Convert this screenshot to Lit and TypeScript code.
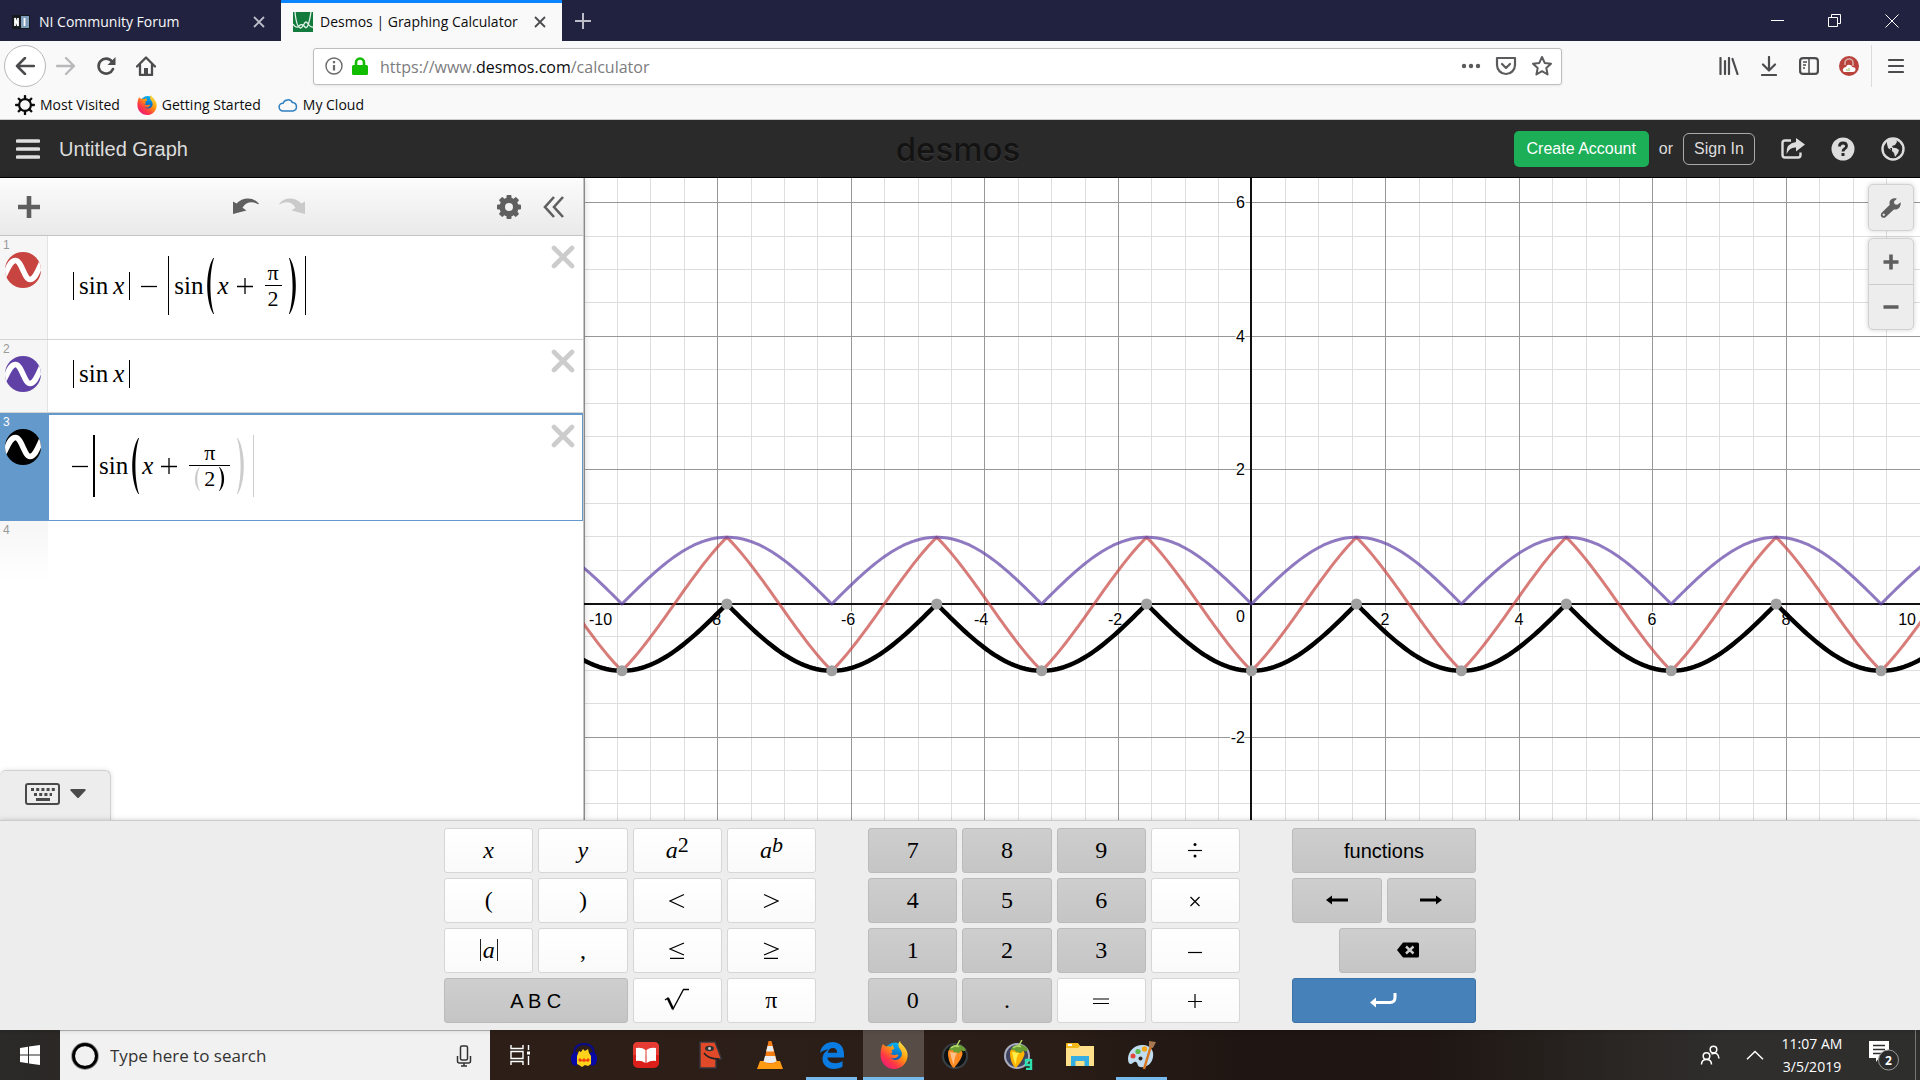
import { LitElement, html, svg, css, nothing } from "lit";
import { customElement, property } from "lit/decorators.js";

const UNIT = 66.8;
const ORIGIN_X = 667.5;
const ORIGIN_Y = 426;
const PLOT_W = 1336;
const PLOT_H = 642;

const px = (x: number) => ORIGIN_X + x * UNIT;
const py = (y: number) => ORIGIN_Y - y * UNIT;

const curve = (fn: (x: number) => number) => {
  const points: string[] = [];
  const step = Math.PI / 80;
  for (let i = -260; i <= 260; i++) {
    const x = i * step;
    points.push(`${px(x).toFixed(2)} ${py(fn(x)).toFixed(2)}`);
  }
  return "M" + points.join("L");
};

@customElement("graph-plot")
export class GraphPlot extends LitElement {
  static styles = css`
    :host { display: block; position: relative; overflow: hidden; background: #fff; }
    .plot { position: absolute; inset: 0; width: 100%; height: 100%; display: block; }
    .minor { stroke: #dedede; }
    .major { stroke: #979797; }
    .axis { stroke: #111; stroke-width: 2; }
    .label {
      font: 16px "Liberation Sans", Arial, sans-serif;
      fill: #000; stroke: #fff; stroke-width: 3; paint-order: stroke; stroke-linejoin: round;
    }
    .mid { text-anchor: middle; }
    .end { text-anchor: end; }
    .red, .purple, .black { fill: none; stroke-linejoin: round; }
    .red { stroke: #c74440; stroke-width: 3; opacity: .7; }
    .purple { stroke: #6042a6; stroke-width: 3; opacity: .7; }
    .black { stroke: #000; stroke-width: 4.5; }
    .poi { fill: #a0a0a0; }
    .controls {
      position: absolute; top: 6px; right: 6px; width: 46px;
      display: flex; flex-direction: column; gap: 7px;
    }
    .group {
      display: flex; flex-direction: column; border: 1px solid #d2d2d2; border-radius: 5px;
      background: #ededed; box-shadow: 0 0 5px rgba(0, 0, 0, .18); overflow: hidden;
    }
    .ctl {
      height: 45px; padding: 0; border: 0; background: none; color: #5f5f5f;
      display: grid; place-items: center;
    }
    .ctl + .ctl { border-top: 1px solid #ccc; }
  `;

  render() {
    const lines = [];
    for (const major of [false, true]) {
      for (let i = -20; i <= 20; i++) {
        if (i === 0 || (i % 4 === 0) !== major) continue;
        const cls = major ? "major" : "minor";
        const x = Math.round(px(i / 2)) + 0.5;
        const y = Math.round(py(i / 2)) - 0.5;
        lines.push(svg`<line class=${cls} x1=${x} x2=${x} y1="0" y2=${PLOT_H}></line>`);
        if (y > 0 && y < PLOT_H)
          lines.push(svg`<line class=${cls} x1="0" x2=${PLOT_W} y1=${y} y2=${y}></line>`);
      }
    }
    const pois = [];
    for (let k = -3; k <= 3; k++) pois.push([k * Math.PI, -1]);
    for (let k = -3; k <= 2; k++) pois.push([(k + 0.5) * Math.PI, 0]);
    return html`
      <svg class="plot" viewBox="0 0 ${PLOT_W} ${PLOT_H}" preserveAspectRatio="xMidYMid slice" role="img" aria-label="Graph">
        ${lines}
        <line class="axis" x1="0" x2=${PLOT_W} y1="426" y2="426"></line>
        <line class="axis" x1="667" x2="667" y1="0" y2=${PLOT_H}></line>
        ${[-8, -6, -4, -2, 2, 4, 6, 8].map(
          (n) => svg`<text class="label mid" x=${Math.round(px(n)) - (n < 0 ? 3 : 0)} y="447">${n}</text>`
        )}
        <text class="label" x="5" y="447">-10</text>
        <text class="label end" x="1332" y="447">10</text>
        <text class="label end" x="661" y="444">0</text>
        ${[6, 4, 2, -2].map(
          (n) => svg`<text class="label end" x="661" y=${Math.round(py(n)) + 5}>${n}</text>`
        )}
        <path class="red" d=${curve((x) => Math.abs(Math.sin(x)) - Math.abs(Math.cos(x)))}></path>
        <path class="purple" d=${curve((x) => Math.abs(Math.sin(x)))}></path>
        <path class="black" d=${curve((x) => -Math.abs(Math.cos(x)))}></path>
        ${pois.map(([x, y]) => svg`<circle class="poi" cx=${px(x)} cy=${py(y)} r="5.5"></circle>`)}
      </svg>
      <div class="controls">
        <div class="group">
          <button class="ctl" aria-label="Graph Settings">
            <svg width="22" height="22" viewBox="0 0 22 22"><path fill="currentColor" fill-rule="evenodd" d="M20.6 5.2l-3.2 2.6-2.8-.6-.7-2.7 3-2.8C14 .4 10.400 1.700 9.600 4.700c-.3 1.200-.1 2.200.2 3L1.700 15.800c-1.200 1.300-1.200 3.100-.1 4.200 1.100 1.100 3 1.200 4.200 0l8.100-7.600c3.400 1 7.500-2 6.700-7.200zM4.600 18.600a1.200 1.200 0 1 1-1.700-1.700 1.200 1.200 0 0 1 1.700 1.700z"/></svg>
          </button>
        </div>
        <div class="group">
          <button class="ctl" aria-label="Zoom In">
            <svg width="16" height="16" viewBox="0 0 16 16"><path stroke="currentColor" stroke-width="3.600" d="M8 .5v15M.5 8h15"/></svg>
          </button>
          <button class="ctl" aria-label="Zoom Out">
            <svg width="16" height="16" viewBox="0 0 16 16"><path stroke="currentColor" stroke-width="3.600" d="M.5 8h15"/></svg>
          </button>
        </div>
      </div>
    `;
  }
}

const openParen = (cls: string) => html`<svg class="paren ${cls}" viewBox="0 0 10 60" preserveAspectRatio="none" aria-label="("><path fill="currentColor" d="M9 0C-1 14-1 46 9 60h1C4 44 4 16 10 0z"/></svg>`;
const closeParen = (cls: string) => html`<svg class="paren ${cls}" viewBox="0 0 10 60" preserveAspectRatio="none" aria-label=")"><path fill="currentColor" d="M1 0C11 14 11 46 1 60H0C6 44 6 16 0 0z"/></svg>`;

@customElement("expression-row")
export class ExpressionRow extends LitElement {
  @property() number = "";
  @property() color = "";
  @property({ type: Boolean, reflect: true }) selected = false;
  @property({ type: Boolean, reflect: true }) blank = false;

  static styles = css`
    :host { display: flex; border-bottom: 1px solid #d4d4d4; background: #fff; }
    .gutter {
      flex: none; width: 48px; background: #f6f6f6; border-right: 1px solid #e3e3e3;
      font: 12px/14px "Liberation Sans", Arial, sans-serif; color: #999; padding-top: 2px; box-sizing: border-box;
      display: flex; flex-direction: column;
    }
    .num { padding-left: 3px; }
    .toggle { width: 36px; height: 36px; padding: 0; border: 0; background: none; margin: 0 auto 0 5px; border-radius: 50%; }
    .toggle svg { display: block; }
    .body { flex: 1; display: flex; justify-content: space-between; align-items: flex-start; padding-right: 8px; }
    .formula {
      display: flex; align-items: center; padding: 20px 0 24px 25px; min-height: 28px;
      font: 25px/28px "Liberation Serif", "Times New Roman", serif; color: #000;
    }
    .remove { margin-top: 9px; padding: 0; width: 24px; height: 24px; border: 0; background: none; color: #ccc; }
    .remove svg { display: block; }
    :host([selected]) { border: 0; }
    :host([selected]) .gutter { background: #6399cb; border-color: #6399cb; color: #fff; }
    :host([selected]) .body { border: 1px solid #6399cb; border-top-width: 2px; padding-right: 7px; }
    :host([selected]) .formula { padding-left: 23px; padding-bottom: 23px; }
    :host([blank]) { border: 0; height: 60px; }
    :host([blank]) .gutter { background: linear-gradient(#f6f6f6, #fff); border-color: transparent; }
    .abs { display: flex; align-items: center; border: solid #000; border-width: 0 1px; padding: 0 5px; }
    .big { height: 59px; }
    .open-abs { border-left-width: 2px; border-right-color: #ccc; height: 62px; padding-left: 4px; }
    .paren { width: 8px; height: 56px; display: block; margin: 0 3px; }
    .small { height: 24px; width: 6px; margin: 0; }
    .ghost { color: #ccc; }
    .op { width: 16px; height: 16px; margin: 0 11px; display: block; }
    .tight { margin: 0 5px 0 0; }
    .left { margin: 0 12px 0 8px; }
    .x { margin-left: 5px; }
    .frac { display: flex; flex-direction: column; text-align: center; font-size: 22px; line-height: 24px; margin-right: 4px; }
    .bottom { border-top: 1px solid #000; padding: 1px 3px 0; display: flex; justify-content: center; align-items: center; gap: 4px; }
    .wide { padding: 1px 5px 0; }
  `;

  private plus(cls = "") {
    return html`<svg class="op ${cls}" viewBox="0 0 16 16" aria-label="+"><path stroke="#000" stroke-width="1.300" d="M8 0v16M0 8.500h16"/></svg>`;
  }
  private minus(cls = "") {
    return html`<svg class="op ${cls}" viewBox="0 0 16 16" aria-label="−"><path stroke="#000" stroke-width="1.300" d="M0 8.500h16"/></svg>`;
  }
  private sinX() {
    return html`<span class="abs">sin<i class="x">x</i></span>`;
  }
  private formula() {
    if (this.number === "1")
      return html`${this.sinX()}${this.minus()}
        <span class="abs big">sin${openParen("")}<i>x</i>${this.plus("left")}<span class="frac"><span>π</span><span class="bottom">2</span></span>${closeParen("")}</span>`;
    if (this.number === "2") return this.sinX();
    return html`${this.minus("tight")}
      <span class="abs open-abs">sin${openParen("")}<i>x</i>${this.plus("left")}<span class="frac"><span>π</span><span class="bottom wide">${openParen("small ghost")}2${closeParen("small")}</span></span>${closeParen("ghost")}</span>`;
  }

  render() {
    return html`
      <div class="gutter">
        <span class="num">${this.number}</span>
        ${this.blank
          ? nothing
          : html`<button class="toggle" aria-label="Hide expression ${this.number}">
              <svg width="36" height="36" viewBox="0 0 36 36">
                <defs><clipPath id="disc"><circle cx="18" cy="18" r="18"/></clipPath></defs>
                <circle cx="18" cy="18" r="18" fill=${this.color}/>
                <path clip-path="url(#disc)" d="M-1 24C4 14 6 8.500 10.500 8.500C16.500 8.500 19.500 27.500 25 27.500C29.500 27.500 32 21 36.500 11" fill="none" stroke="#fff" stroke-width="5.600"/>
              </svg></button>`}
      </div>
      <div class="body">
        ${this.blank
          ? nothing
          : html`<div class="formula">${this.formula()}</div>
              <button class="remove" aria-label="Delete expression ${this.number}">
                <svg width="24" height="24" viewBox="0 0 24 24"><path stroke="currentColor" stroke-width="4.600" stroke-linecap="round" d="M3 3l18 18M21 3L3 21"/></svg>
              </button>`}
      </div>
    `;
  }
}

@customElement("math-keypad")
export class MathKeypad extends LitElement {
  static styles = css`
    :host {
      display: flex; justify-content: center; gap: 52px; background: #ededed; border-top: 1px solid #ccc;
      padding: 7px 0; box-shadow: 0 0 5px rgba(0, 0, 0, .2); z-index: 1;
    }
    .pad { display: grid; grid-template-columns: repeat(4, 1fr); grid-auto-rows: 45px; gap: 5px; width: 372px; }
    .side { width: 184px; }
    .key {
      padding: 0 0 2px; border: 1px solid #d6d6d6; border-radius: 3px; background: linear-gradient(#fff, #fafafa);
      font: 24px/28px "Liberation Serif", "Times New Roman", serif; color: #000;
      display: flex; align-items: center; justify-content: center;
    }
    .dark { background: linear-gradient(#cecece, #c5c5c5); border-color: #bbb; }
    .sans { font: 20px/24px "Liberation Sans", Arial, sans-serif; padding: 0; }
    .w2 { grid-column: span 2; }
    .w3 { grid-column: 2 / span 3; }
    .w4 { grid-column: span 4; }
    .blue { background: #4781b9; border-color: #3b73a9; color: #fff; }
    .sup { font-size: 22px; line-height: 12px; align-self: flex-start; margin-top: 10px; }
    .bars { border: solid #222; border-width: 0 1px; line-height: 22px; padding: 0 2px; }
  `;

  private key(content: unknown, cls = "", label?: string) {
    return html`<button class="key ${cls}" aria-label=${label ?? nothing}>${content}</button>`;
  }
  private sign(d: string) {
    return html`<svg width="16" height="18" viewBox="0 0 16 18"><path d=${d} fill="none" stroke="#000" stroke-width="1.200"/></svg>`;
  }

  render() {
    const k = this.key.bind(this);
    const s = this.sign.bind(this);
    return html`
      <div class="pad">
        ${k(html`<i>x</i>`)}${k(html`<i>y</i>`)}
        ${k(html`<i>a</i><span class="sup">2</span>`)}${k(html`<i>a</i><i class="sup">b</i>`)}
        ${k("(")}${k(")")}
        ${k(s("M15 3.500L1 10l14 6.500"), "", "less than")}${k(s("M1 3.500L15 10L1 16.500"), "", "greater than")}
        ${k(html`<span class="bars"><i>a</i></span>`)}${k(",")}
        ${k(s("M15 2L1 8l14 6M1 17.400h14"), "", "less than or equal")}${k(s("M1 2L15 8L1 14M1 17.400h14"), "", "greater than or equal")}
        ${k("A B C", "dark sans w2")}
        ${k(html`<svg width="26" height="24" viewBox="0 0 26 24"><path d="M1 12l3-2 5 11L19.500 1.500H25" fill="none" stroke="#000" stroke-width="1.300"/><path d="M4 10.500l5 10.500" stroke="#000" stroke-width="2.500"/></svg>`, "", "square root")}
        ${k("π")}
      </div>
      <div class="pad">
        ${["7", "8", "9"].map((n) => k(n, "dark"))}
        ${k(html`<svg width="16" height="16" viewBox="0 0 16 16"><path d="M1 8.500h14" stroke="#000" stroke-width="1.200"/><circle cx="8" cy="2.500" r="1.500"/><circle cx="8" cy="14" r="1.500"/></svg>`, "", "divide")}
        ${["4", "5", "6"].map((n) => k(n, "dark"))}${k(s("M3.500 6l9 9M12.500 6l-9 9"), "", "multiply")}
        ${["1", "2", "3"].map((n) => k(n, "dark"))}${k(s("M1 11.500h14"), "", "minus")}
        ${k("0", "dark")}${k(".", "dark")}${k(s("M0 8h16M0 12.500h16"), "", "equals")}${k(s("M8 3v14M1 10.500h14"), "", "plus")}
      </div>
      <div class="pad side">
        ${k("functions", "dark sans w4")}
        ${k(html`<svg width="22" height="10" viewBox="0 0 22 10"><path d="M0 5l6-4.500v3h16v3H6v3z"/></svg>`, "dark w2", "left")}
        ${k(html`<svg width="22" height="10" viewBox="0 0 22 10"><path d="M22 5l-6-4.500v3H0v3h16v3z"/></svg>`, "dark w2", "right")}
        ${k(html`<svg width="22" height="16" viewBox="0 0 22 16"><path d="M0 8l6-7.500h14.500q1.500 0 1.500 1.500v12q0 1.500-1.500 1.500H6z"/><path d="M9 4.500l7.500 7M16.500 4.500L9 11.500" stroke="#ccc" stroke-width="2.400"/></svg>`, "dark w3", "backspace")}
        ${k(html`<svg width="28" height="16" viewBox="0 0 28 16"><path d="M5 10.500h15q5 0 5-5V1" fill="none" stroke="#fff" stroke-width="3"/><path d="M0 10.500l6-5v10z" fill="#fff"/></svg>`, "blue w4", "enter")}
      </div>
    `;
  }
}

const gear = (size: number, teeth: number, thick: number, outer: number, inner: number) => {
  const items = [];
  for (let i = 0; i < teeth; i++)
    items.push(svg`<rect x=${12 - thick / 2} y="0" width=${thick} height="6" rx="1" fill="currentColor" transform="rotate(${(i * 360) / teeth} 12 12)"></rect>`);
  return html`<svg width=${size} height=${size} viewBox="0 0 24 24">${items}<circle cx="12" cy="12" r=${(outer + inner) / 2} fill="none" stroke="currentColor" stroke-width=${outer - inner}></circle></svg>`;
};

const firefox = (size: number, id: string) => html`<svg width=${size} height=${size} viewBox="0 0 28 28">
  <defs>
    <linearGradient id="${id}a" x1=".9" y1="0" x2=".1" y2="1"><stop offset="0" stop-color="#fff44f"/><stop offset=".4" stop-color="#ff980e"/><stop offset=".7" stop-color="#ff3647"/><stop offset="1" stop-color="#e31587"/></linearGradient>
    <linearGradient id="${id}b" x1=".5" y1="0" x2=".3" y2="1"><stop offset="0" stop-color="#00b3f4"/><stop offset="1" stop-color="#0a3fa8"/></linearGradient>
  </defs>
  <circle cx="15" cy="12" r="10.500" fill="url(#${id}b)"/>
  <path fill="url(#${id}a)" d="M3 3c1 1 2 2 3 2.500 2-.6 3.500-.4 5 .300L13 3.500c0 2 .500 3 1.500 4.200-1 .8-1.800 1-3 1.400l1 2.200-2.300 2c2 0 3 1 4.800.700 2-.3 3-.8 3.500.200-2 3.300-5 3.800-7.800 2.500 4 4.500 11 1.800 11.200-3.700.1-3.500-2.400-5-3.200-7C18 3.500 18.500 1.500 20 0c.300 2.500 2.500 3.500 4.700 6.500C27 9.500 28 12.500 27.500 16 26.500 23 21 28 14 28 6.500 28 .600 22 .600 14.500.600 10 1 6 3 3z"/>
</svg>`;

const fruit = (badge: boolean) => html`<svg width="30" height="30" viewBox="0 0 30 30">
  <circle cx="14" cy="16" r="13" fill=${badge ? "#a9adc0" : "#3a4044"}/><circle cx="14" cy="16" r="11" fill=${badge ? "#3f4360" : "#0e1112"}/>
  <path d="M7 13c0-4 4-6 8-5s8 3 6 8-5 8-8 12c-4-2-6-10-6-15z" fill=${badge ? "#ffb400" : "#ff8a1f"}/>
  <path d="M9 12c1 5 2 9 4 13 0-5 1-9 3-12z" fill=${badge ? "#fff04a" : "#ffc08a"}/>
  <path d="M8 9c2-3 4-4 7-4 4-1 8 1 10 5-2 2-4 1-5 0 0 3-3 4-5 2-1 1-3 0-3-2-2 1-3 0-4-1z" fill="#6a9e35"/>
  <path d="M10 8c2-2 6-3 8-1M15 7l4-7" stroke="#b4d86a" stroke-width="1.500" fill="none"/>
  ${badge ? svg`<path d="M28 20h-5v5h5M28 19v10h-5" fill="none" stroke="#2ee0b0" stroke-width="2.400"></path>` : nothing}
</svg>`;

@customElement("task-bar")
export class TaskBar extends LitElement {
  static styles = css`
    :host {
      display: flex; height: 50px; color: #fff;
      font: 14px/23px "Open Sans", "Segoe UI", sans-serif;
      background: linear-gradient(90deg, #2b2a28 0, #2d1f18 25%, #2a1d17 55%, #1f1512 65%, #1f1714 75%, #2a2623 84%, #2f2e2d 90%, #2e2e2d 100%);
    }
    .start, .app, .tray { padding: 0; border: 0; background: none; color: inherit; display: grid; place-items: center; flex: none; }
    .start { width: 60px; }
    .search {
      width: 430px; flex: none; box-sizing: border-box; background: #f1f1f1; border-top: 1px solid #b9b9b9;
      display: flex; align-items: center; padding: 0 18px 0 11px; gap: 11px; color: #222;
    }
    .field { flex: 1; min-width: 0; border: 0; padding: 0; background: none; font: 17px/24px "Open Sans", "Segoe UI", sans-serif; }
    .field::placeholder { color: #333; opacity: 1; }
    .apps { display: flex; gap: 1px; flex: 1; }
    .app { width: 61px; position: relative; }
    .view { width: 62px; }
    .open::after { content: ""; position: absolute; left: 5px; right: 5px; bottom: 0; height: 3px; background: #76b9ed; }
    .active { background: #574c46; }
    .active::after { left: 0; right: 0; }
    .tail { display: flex; align-items: stretch; }
    .people { width: 58px; }
    .more { width: 32px; }
    .clock { font: inherit; width: 82px; text-align: center; display: block; }
    .notes { width: 62px; }
    .peek { width: 5px; border-left: 1px solid #777; }
    .badge { font: 700 12px "Open Sans", sans-serif; fill: #fff; text-anchor: middle; }
  `;

  render() {
    return html`
      <button class="start" aria-label="Start"><svg width="20" height="20" viewBox="0 0 20 20"><path fill="#fff" d="M0 3l8-1.200V9.500H0zM9 1.600L20 0v9.500H9zM0 10.500h8v7.700L0 17zM9 10.500h11V20L9 18.400z"/></svg></button>
      <label class="search">
        <svg width="28" height="28" viewBox="0 0 28 28"><circle cx="14" cy="14" r="11.800" fill="none" stroke="#888" stroke-width="4"/><circle cx="14" cy="14" r="11.500" fill="none" stroke="#000" stroke-width="2.800"/></svg>
        <input class="field" aria-label="Search" placeholder="Type here to search">
        <svg width="16" height="22" viewBox="0 0 16 22" fill="none" stroke="#333"><rect x="4.500" y="1" width="7" height="14" rx="1.500" stroke-width="1.500"/><path d="M1.500 11v5q0 2 2 2h9q2 0 2-2v-5M8 18v3M5 21h6" stroke-width="1.500"/></svg>
      </label>
      <div class="apps">
        <button class="app view" aria-label="Task View"><svg width="22" height="20" viewBox="0 0 22 20" fill="none" stroke="#fff" stroke-width="1.400"><path d="M1 0v3.500h12V0M1 20v-3.500h12V20M1 6.500h12v7H1zM18.500 0v5M18.500 11v9"/><path d="M18.500 6.500v3" stroke-width="3"/></svg></button>
        <button class="app" aria-label="Audacity"><svg width="28" height="26" viewBox="0 0 28 26"><path d="M4 13C4 5 8 2 14 2s10 3 10 11" fill="none" stroke="#0a0a8c" stroke-width="2"/><path d="M1 17q0-7 6-7l1 1v11l-2 2q-5-1-5-7zM27 17q0-7-6-7l-1 1v11l2 2q5-1 5-7z" fill="#0808a4"/><path d="M7 22V14l2-5 2 1 2-3 2 2 3-2 1 4 2 3v8l-3 2-3-1-3 2-3-2z" fill="#ffd21c"/><path d="M8 18l2-2 2 2 2-2 2 2 2-2 2 2-2 2-2-1-2 1-2-1-2 1z" fill="#f2420c"/></svg></button>
        <button class="app" aria-label="Reader"><svg width="26" height="26" viewBox="0 0 26 26"><rect width="26" height="26" rx="5" fill="#dc1f1b"/><path d="M0 13V5q0-5 5-5h16q5 0 5 5v8z" fill="#e63b33"/><path d="M3 6q6-1 9.500 2v13Q8 18 3 19zM23 6q-6-1-9.500 2v13q4.500-3 9.500-2z" fill="#fff"/></svg></button>
        <button class="app" aria-label="Profile"><svg width="28" height="28" viewBox="0 0 28 28"><path d="M6 1h15l6.500 17H22v9H6z" fill="#e04a28" stroke="#34353c" stroke-width="1.400"/><ellipse cx="15.500" cy="7.500" rx="4.500" ry="2.800" fill="#333"/><circle cx="15.500" cy="7.500" r="1.400" fill="#ccc"/><path d="M10 12q4 6 15 6" fill="none" stroke="#222" stroke-width="1.500"/></svg></button>
        <button class="app" aria-label="VLC"><svg width="26" height="28" viewBox="0 0 26 28"><path d="M3 20h20l3 8H0z" fill="#ff9a12"/><path d="M13 0h1.500L20 21q-6.500 4-13 0L11.500 0z" fill="#f57c12"/><path d="M10.500 5h5l1.400 5.500H9.100zM8 15h10.200l1.300 5.500q-6 3-13 0z" fill="#e9edf0"/></svg></button>
        <button class="app open" aria-label="Edge"><svg width="26" height="28" viewBox="0 0 26 28"><path fill="#0a7be0" d="M1 12C2.500 4.500 7.500 1 13.500 1 21 1 25 6.500 25 13v3.500H8.500c.3 4 3.800 5.700 7.500 5.700 2.800 0 5.300-.7 7.500-2v5.600c-2.800 1.500-5.700 2.200-9 2.200C8 28 3.500 23.500 3.500 18c0-4.500 2.500-7.600 6-9.500C6.500 8.500 3 10 1 12zm7.800-.2h9.400c0-3-1.700-4.800-4.300-4.800-2.700 0-4.500 2-5.100 4.800z"/></svg></button>
        <button class="app open active" aria-label="Firefox">${firefox(28, "t")}</button>
        <button class="app" aria-label="FL Studio">${fruit(false)}</button>
        <button class="app" aria-label="FL Studio 9">${fruit(true)}</button>
        <button class="app" aria-label="File Explorer"><svg width="28" height="24" viewBox="0 0 28 24"><path d="M0 1h12l2 2h14v20H0z" fill="#ffe08a"/><path d="M0 1q0-1 1-1h11l2 3-2 2H0z" fill="#f6b91c"/><path d="M5 23V13h18v10h-4.500v-5h-9v5z" fill="#35aee2"/><path d="M2 2h4" stroke="#fff" stroke-width="2"/></svg></button>
        <button class="app open" aria-label="Paint"><svg width="30" height="30" viewBox="0 0 30 30"><path d="M1 19C1 10 9 4 17 5c7 1 10 6 9 12-1 7-7 11-13 10-3-1-2-4-4-5s-3 2-5 2-3-2-3-5z" fill="#bfdcf0"/><circle cx="6" cy="16" r="2.500" fill="#e3453a"/><circle cx="11" cy="11.500" r="2.600" fill="#5cb84c"/><circle cx="17.500" cy="9" r="2.700" fill="#f5a51c"/><circle cx="13.500" cy="18.500" r="2" fill="#33231c"/><path d="M24 6L17 29" stroke="#d87720" stroke-width="2.500"/><path d="M22 1l7 1-3 6-4-1z" fill="#a87850"/></svg></button>
      </div>
      <div class="tail">
        <button class="tray people" aria-label="People"><svg width="20" height="20" viewBox="0 0 20 20" fill="none" stroke="#fff" stroke-width="1.500"><circle cx="13.500" cy="4.500" r="3.300"/><circle cx="6.500" cy="11" r="3.300"/><path d="M1.500 19.500q0-5 5-5t5 5M11.500 9q6.500-3 7.500 4.500"/></svg></button>
        <button class="tray more" aria-label="Show hidden icons"><svg width="18" height="10" viewBox="0 0 18 10"><path d="M1 9.200L9 1.500l8 7.700" fill="none" stroke="#fff" stroke-width="1.500"/></svg></button>
        <button class="tray clock">11:07 AM<br>3/5/2019</button>
        <button class="tray notes" aria-label="2 notifications"><svg width="34" height="32" viewBox="0 0 34 32"><path d="M2 2h20v17H12l-3 4v-4H2z" fill="#fff"/><path d="M6 6.500h12M6 10.500h12M6 14.500h12" stroke="#2e2e2d" stroke-width="1.500"/><circle cx="21.500" cy="21" r="10" fill="#2b2b2b" stroke="#999"/><text class="badge" x="21.500" y="25.500">2</text></svg></button>
        <button class="tray peek" aria-label="Show desktop"></button>
      </div>
    `;
  }
}

@customElement("app-root")
export class AppRoot extends LitElement {
  static styles = css`
    :host {
      display: flex; flex-direction: column; min-height: 100vh; overflow: hidden;
      font: 14px/20px "Open Sans", "Segoe UI", sans-serif; color: #0c0c0d;
    }
    button, a { font: inherit; color: inherit; }
    button { padding: 0; border: 0; background: none; display: grid; place-items: center; flex: none; }
    a { text-decoration: none; }
    svg { display: block; flex: none; }
    .tabs { display: flex; height: 41px; background: #20223f; color: #f9f9fa; flex: none; }
    .tab { width: 281px; box-sizing: border-box; display: flex; align-items: center; gap: 9px; padding: 3px 12px 0; }
    .tab-title { flex: 1; white-space: nowrap; }
    .current { background: #f9f9f9; color: #0c0c0d; border-top: 3px solid #0a84ff; padding: 0 12px; gap: 7px; }
    .close { width: 20px; height: 20px; }
    .new { width: 42px; color: #bbbcc8; }
    .window { margin-left: auto; display: flex; }
    .win { width: 57px; }
    .nav { display: flex; align-items: center; height: 50px; background: #f9f9f9; flex: none; padding: 0 5px 0 4px; color: #4c4c4f; }
    .back { width: 42px; height: 42px; border: 1px solid #b8b8b8; border-radius: 50%; background: #fff; box-sizing: border-box; }
    .tool { width: 40px; height: 40px; }
    .faded { color: #b9b9bb; }
    .url {
      width: 1249px; box-sizing: border-box; height: 37px; margin-left: 147px; background: #fff; border: 1px solid #bebebe; border-radius: 3px;
      box-shadow: 0 1px 3px rgba(0, 0, 0, .08);
      display: flex; align-items: center; gap: 9px; padding: 0 8px 0 11px; color: #5b5b5d; flex: 0 1 auto;
    }
    .address { flex: 1; font-size: 16px; color: #7c7c7e; padding: 2px 0 0 3px; }
    .domain { color: #0c0c0d; }
    .page-actions { display: flex; gap: 12px; align-items: center; }
    .tools { margin-left: auto; display: flex; align-items: center; }
    .menu { border-left: 1px solid #dcdcdc; margin-left: 2px; height: 42px; padding-left: 4px; width: 44px; }
    .marks { display: flex; align-items: center; gap: 17px; height: 28px; flex: none; background: #f9f9f9; border-bottom: 1px solid #ccc; padding-left: 15px; }
    .mark { display: flex; align-items: center; gap: 5px; }
    .header {
      display: grid; grid-template-columns: 1fr auto 1fr; align-items: center; height: 57px; flex: none; background: #2a2a2a; border-bottom: 1px solid #000;
      font: 16px/20px "Liberation Sans", Arial, sans-serif; color: #ddd;
    }
    .lead { display: flex; align-items: center; gap: 19px; padding-left: 16px; }
    .title { font: 20px/24px "Liberation Sans", Arial, sans-serif; }
    .logo { font: 500 33px/40px Inter, "Open Sans", sans-serif; color: #131313; text-shadow: 0 1px 1px #3c3c3c; padding-right: 4px; }
    .account { display: flex; align-items: center; justify-content: flex-end; gap: 10px; padding-right: 15px; }
    .create { height: 36px; width: 135px; background: #1dae58; border-radius: 5px; color: #fff; white-space: nowrap; }
    .sign { height: 32px; width: 72px; border: 1px solid #aaa; border-radius: 6px; box-sizing: border-box; white-space: nowrap; }
    .head-icons { display: flex; gap: 26px; margin-left: 16px; }
    .main { flex: 1; display: flex; }
    .panel {
      width: 583px; flex: none; display: flex; flex-direction: column; background: #fff; border-right: 1px solid #c4c4c4;
      box-shadow: 0 0 8px rgba(0, 0, 0, .2); z-index: 1;
    }
    .bar {
      height: 57px; flex: none; display: grid; grid-template-columns: 1fr auto 1fr; align-items: center; padding: 0 18px;
      border-bottom: 1px solid #c4c4c4; background: linear-gradient(#fcfcfc, #e9e9e9); color: #5f5f5f;
    }
    .history { display: flex; gap: 20px; margin-right: 46px; }
    .panel-tools { display: flex; gap: 22px; justify-content: flex-end; align-items: center; }
    .keys {
      margin-top: auto; width: 111px; height: 50px; background: #ededed; border: 1px solid #d0d0d0; border-bottom: 0; border-left: 0; border-radius: 6px 6px 0 0;
      box-sizing: border-box; display: flex; align-items: center; gap: 10px; padding: 0 0 4px 25px; color: #4a4a4a; box-shadow: 0 0 5px rgba(0, 0, 0, .12);
    }
    .plot { flex: 1; min-width: 0; }
  `;

  private cross(color: string) {
    return html`<svg width="12" height="12" viewBox="0 0 12 12"><path d="M1 1l10 10M11 1L1 11" stroke=${color} stroke-width="1.800"/></svg>`;
  }
  private turn(flip: boolean, color: string) {
    return html`<svg width="26" height="18" viewBox="0 0 26 18"><path transform=${flip ? "translate(26 0) scale(-1 1)" : ""} fill=${color} d="M0 3.500l3.500 2C9-.5 20-2 26 6l-1 .3C20 3 13 3.500 9.500 9.800l4 2.800L0 16z"/></svg>`;
  }

  render() {
    return html`
      <div class="tabs">
        <div class="tab">
          <svg width="18" height="14" viewBox="0 0 18 14"><rect width="18" height="14" fill="#15181c"/><rect x="9" y="1" width="8" height="12" fill="#7d9db8"/><path d="M3 11V3l3 8V3M12.500 3v8" stroke="#fff" stroke-width="1.800" fill="none"/></svg>
          <span class="tab-title">NI Community Forum</span>
          <button class="close" aria-label="Close tab">${this.cross("#bbbcc8")}</button>
        </div>
        <div class="tab current">
          <svg width="20" height="20" viewBox="0 0 20 20"><rect width="20" height="20" fill="#127a3d"/><path d="M2 0C3 10 5 16 7.500 16S11 10 13 10s3 6 7 5M0 12q3 5 6 2t6 1 6-15" fill="none" stroke="#e4f3e8" stroke-width="1.300"/></svg>
          <span class="tab-title">Desmos | Graphing Calculator</span>
          <button class="close" aria-label="Close tab">${this.cross("#4c4c4f")}</button>
        </div>
        <button class="new" aria-label="New tab"><svg width="18" height="18" viewBox="0 0 18 18"><path d="M9 1v16M1 9h16" stroke="currentColor" stroke-width="2"/></svg></button>
        <div class="window">
          <button class="win" aria-label="Minimize"><svg width="13" height="13" viewBox="0 0 13 13"><path d="M0 6.500h13" stroke="#fff"/></svg></button>
          <button class="win" aria-label="Restore"><svg width="13" height="13" viewBox="0 0 13 13"><path d="M.5 3.500h9v9h-9zM3.500 3.500v-3h9v9h-3" fill="none" stroke="#fff"/></svg></button>
          <button class="win" aria-label="Close"><svg width="14" height="14" viewBox="0 0 14 14"><path d="M.5.500l13 13M13.500.500l-13 13" stroke="#fff"/></svg></button>
        </div>
      </div>

      <div class="nav">
        <button class="back" aria-label="Back"><svg width="20" height="18" viewBox="0 0 20 18"><path d="M10 1L2 9l8 8M2 9h17" fill="none" stroke="currentColor" stroke-width="2.500" stroke-linecap="round" stroke-linejoin="round"/></svg></button>
        <button class="tool faded" aria-label="Forward"><svg width="20" height="18" viewBox="0 0 20 18"><path d="M10 1l8 8-8 8M18 9H1" fill="none" stroke="currentColor" stroke-width="2.300" stroke-linecap="round" stroke-linejoin="round"/></svg></button>
        <button class="tool" aria-label="Reload"><svg width="20" height="20" viewBox="0 0 20 20"><path d="M16 5.500A7.500 7.500 0 1 0 17 13" fill="none" stroke="currentColor" stroke-width="2.600" stroke-linecap="round"/><path d="M19.500 1v8h-8z" fill="currentColor"/></svg></button>
        <button class="tool" aria-label="Home"><svg width="20" height="20" viewBox="0 0 20 20"><path d="M1 10.500L10 1.500l9 9M4 9v10h12V9" fill="none" stroke="currentColor" stroke-width="2.300" stroke-linecap="round" stroke-linejoin="round"/><path d="M8 12h4v6H8z" fill="currentColor"/></svg></button>
        <div class="url">
          <svg width="18" height="18" viewBox="0 0 18 18"><circle cx="9" cy="9" r="8" fill="none" stroke="#6a6a6c" stroke-width="1.400"/><path d="M9 8v5.500M9 4v2.200" stroke="#6a6a6c" stroke-width="2.200"/></svg>
          <svg width="16" height="18" viewBox="0 0 16 18"><rect y="8" width="16" height="10" rx="1.500" fill="#12bc00"/><path d="M4 9V5.500a4 4 0 0 1 8 0V9" fill="none" stroke="#12bc00" stroke-width="2.600"/></svg>
          <span class="address">https://www.<span class="domain">desmos.com</span>/calculator</span>
          <div class="page-actions">
            <button aria-label="Page actions"><svg width="22" height="20" viewBox="0 0 22 20" fill="currentColor"><circle cx="3" cy="10" r="2.200"/><circle cx="10" cy="10" r="2.200"/><circle cx="17" cy="10" r="2.200"/></svg></button>
            <button aria-label="Save to Pocket"><svg width="22" height="20" viewBox="0 0 22 20" fill="none" stroke="currentColor" stroke-width="2.200" stroke-linecap="round" stroke-linejoin="round"><path d="M2 2h18v7a9 9 0 0 1-18 0zM7 8l4 4 4-4"/></svg></button>
            <button aria-label="Bookmark"><svg width="24" height="22" viewBox="0 0 24 22"><path d="M13 2l2.700 5.900 6.300.8-4.700 4.300 1.300 6.500-5.600-3.300-5.600 3.300 1.300-6.500L4 8.700l6.300-.8z" fill="none" stroke="currentColor" stroke-width="2" stroke-linejoin="round"/></svg></button>
          </div>
        </div>
        <div class="tools">
          <button class="tool" aria-label="Library"><svg width="20" height="18" viewBox="0 0 20 18"><path d="M1.500 1v16M6 4v13M10 1v16M13.500 2l5 15" stroke="currentColor" stroke-width="2.200" stroke-linecap="round"/></svg></button>
          <button class="tool" aria-label="Downloads"><svg width="18" height="20" viewBox="0 0 18 20"><path d="M9 1v13M3 8.500l6 6 6-6M2 19h14" fill="none" stroke="currentColor" stroke-width="2.200" stroke-linecap="round" stroke-linejoin="round"/></svg></button>
          <button class="tool" aria-label="Sidebars"><svg width="20" height="18" viewBox="0 0 20 18"><rect x="1.100" y="1.100" width="17.800" height="15.800" rx="3" fill="none" stroke="currentColor" stroke-width="2.200"/><path d="M10 1v16M4 5h4M4 8h3M4 11h2" stroke="currentColor" stroke-width="1.500"/></svg></button>
          <button class="tool" aria-label="Cloud lock"><svg width="20" height="20" viewBox="0 0 20 20"><circle cx="10" cy="10" r="10" fill="#b9433c"/><path d="M6 9V7a4 4 0 0 1 8 0v3" fill="none" stroke="#d9a8a2" stroke-width="1.600"/><path d="M5 16q-2-1-1-3t3-2q1-3 4-2 2 0 2 2 4 0 3.500 3-.5 2-2.500 2z" fill="#fff"/><path d="M8 15v-2M10 15v-3" stroke="#8bbf4d"/></svg></button>
          <button class="menu" aria-label="Menu"><svg width="16" height="16" viewBox="0 0 16 16"><path d="M1 2h14M1 8h14M1 14h14" stroke="currentColor" stroke-width="2.200" stroke-linecap="round"/></svg></button>
        </div>
      </div>

      <nav class="marks">
        <a class="mark" href="#most-visited">${gear(20, 8, 2.8, 8.4, 5.8)}Most Visited</a>
        <a class="mark" href="#getting-started">${firefox(20, "m")}Getting Started</a>
        <a class="mark" href="#my-cloud"><svg width="20" height="14" viewBox="0 0 20 14"><path d="M5 13a3.900 3.900 0 0 1 0-7.800A5.300 5.300 0 0 1 14.500 4.500 4.300 4.300 0 0 1 15 13z" fill="none" stroke="#2e7fc0" stroke-width="1.500"/></svg>My Cloud</a>
      </nav>

      <header class="header">
        <div class="lead">
          <button aria-label="Open graphs"><svg width="24" height="20" viewBox="0 0 24 20"><path d="M1.500 2h21M1.500 10h21M1.500 18h21" stroke="#e0e0e0" stroke-width="3.600" stroke-linecap="round"/></svg></button>
          <span class="title">Untitled Graph</span>
        </div>
        <span class="logo">desmos</span>
        <div class="account">
          <button class="create">Create Account</button>
          <span>or</span>
          <button class="sign">Sign In</button>
          <div class="head-icons">
            <button aria-label="Share"><svg width="24" height="22" viewBox="0 0 24 22"><path d="M10 2.500H4q-2.500 0-2.500 2.500v12q0 2.500 2.500 2.500h13q2.500 0 2.500-2.500v-2.500" fill="none" stroke="#ddd" stroke-width="2.400"/><path d="M15 0l9 6.500-9 7V9.600Q9 9 5.500 16 5 5 15 4z" fill="#ddd"/></svg></button>
            <button aria-label="Help"><svg width="24" height="24" viewBox="0 0 24 24"><circle cx="12" cy="12" r="11.500" fill="#ddd"/><path d="M8.500 9.500q0-3.500 3.500-3.500t3.500 3q0 1.800-1.800 2.800T12 14.500" fill="none" stroke="#2a2a2a" stroke-width="2.800"/><rect x="10.500" y="16" width="3" height="3" fill="#2a2a2a"/></svg></button>
            <button aria-label="Language"><svg width="24" height="24" viewBox="0 0 24 24"><circle cx="12" cy="12" r="10.500" fill="none" stroke="#ddd" stroke-width="2.400"/><path d="M6 4q4-3 9-2l1 3-2 3-3 1 1 2-3 0 1 2-3-2-1-4zM11 11q4-1 7 2l-1 3-3 4-1-4-2-2z" fill="#ddd"/></svg></button>
          </div>
        </div>
      </header>

      <div class="main">
        <section class="panel">
          <div class="bar">
            <div><button aria-label="Add item"><svg width="22" height="22" viewBox="0 0 22 22"><path d="M11 0v22M0 11h22" stroke="currentColor" stroke-width="4.600"/></svg></button></div>
            <div class="history">
              <button aria-label="Undo">${this.turn(false, "#5f5f5f")}</button>
              <button aria-label="Redo">${this.turn(true, "#cacaca")}</button>
            </div>
            <div class="panel-tools">
              <button aria-label="Edit list">${gear(24, 8, 5, 9.6, 4)}</button>
              <button aria-label="Hide list"><svg width="22" height="22" viewBox="0 0 22 22"><path d="M11 1L2 11l9 10M20 1l-9 10 9 10" fill="none" stroke="currentColor" stroke-width="2.600"/></svg></button>
            </div>
          </div>
          <expression-row number="1" color="#c74440"></expression-row>
          <expression-row number="2" color="#6042a6"></expression-row>
          <expression-row number="3" color="#000" selected></expression-row>
          <expression-row number="4" blank></expression-row>
          <button class="keys" aria-label="Toggle keypad">
            <svg width="35" height="22" viewBox="0 0 35 22"><rect x="1" y="1" width="33" height="20" rx="2" fill="none" stroke="currentColor" stroke-width="2"/><path d="M6 6.500h24" stroke="currentColor" stroke-width="3" stroke-dasharray="3 2.200"/><path d="M9 11.500h18" stroke="currentColor" stroke-width="3" stroke-dasharray="3 2.200"/><path d="M11 16.500h14" stroke="currentColor" stroke-width="3"/></svg>
            <svg width="16" height="9" viewBox="0 0 16 9"><path d="M1 0h14q1 .5.500 1.500L8.500 9h-1L.500 1.500Q0 .5 1 0z" fill="currentColor"/></svg>
          </button>
        </section>
        <graph-plot class="plot"></graph-plot>
      </div>
      <math-keypad></math-keypad>
      <task-bar></task-bar>
    `;
  }
}
